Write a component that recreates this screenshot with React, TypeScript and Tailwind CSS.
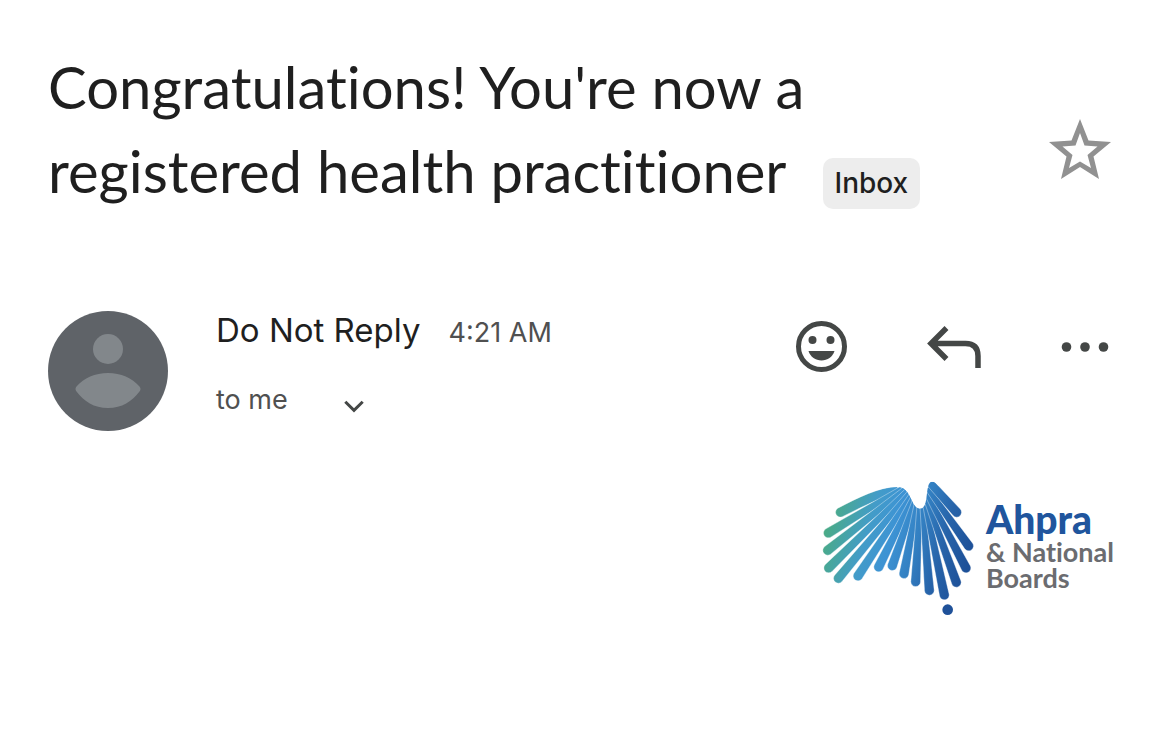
import React from "react";

type Ray = [number, number, number, number];

// Outer end x/y, inner end x/y of every straight ray of the logo.
const rays: Ray[] = [
  [82, 192, 296, 63],
  [80, 244, 304, 67],
  [83, 297, 311, 73],
  [112, 328, 318, 81],
  [171, 321, 324, 90],
  [233, 294, 330, 99],
  [274, 290, 337, 109],
  [309, 314, 345, 119],
  [344, 338, 355, 126],
  [385, 364, 366, 125],
  [430, 378, 375, 116],
  [466, 340, 380, 101],
  [495, 297, 383, 84],
  [503, 231, 387, 68],
  [467, 130, 394, 49],
];

// A tapered ray: round at the outer end, flat and slightly extended at the inner one.
function rayPath([ox, oy, ix, iy]: Ray, outer: number, inner: number): string {
  const len = Math.hypot(ix - ox, iy - oy);
  const dx = (ix - ox) / len;
  const dy = (iy - oy) / len;
  const ex = ix + dx * 14;
  const ey = iy + dy * 14;
  return [
    `M${ox - dy * outer} ${oy + dx * outer}`,
    `A${outer} ${outer} 0 0 1 ${ox + dy * outer} ${oy - dx * outer}`,
    `L${ex + dy * inner} ${ey - dx * inner}`,
    `L${ex - dy * inner} ${ey + dx * inner}Z`,
  ].join("");
}

function LogoMark() {
  return (
    <svg viewBox="60 30 465 408" className="h-[136px] w-[155px] shrink-0" aria-hidden="true">
      <defs>
        <linearGradient id="rays" gradientUnits="userSpaceOnUse" x1="75" y1="170" x2="500" y2="290">
          <stop offset="0" stopColor="#4aab86" />
          <stop offset="0.12" stopColor="#47a5a2" />
          <stop offset="0.28" stopColor="#439cc8" />
          <stop offset="0.45" stopColor="#3d93d4" />
          <stop offset="0.62" stopColor="#3380c2" />
          <stop offset="0.8" stopColor="#2763a9" />
          <stop offset="1" stopColor="#1d5098" />
        </linearGradient>
        <clipPath id="outline">
          <path d="M0 60L105 112C170 78 240 54 290 54C332 54 328 119 358 119C386 119 370 38 393 38C402 38 406 44 412 50L540 110V480H0Z" />
        </clipPath>
      </defs>
      <g fill="url(#rays)" stroke="#fff" strokeOpacity="0.55" strokeWidth="2" clipPath="url(#outline)">
        <path d="M112 117C170 86 235 54 288 53L302 72C240 82 180 116 124 143A14 14 0 0 1 112 117Z" />
        {rays.map((r) => (
          <path key={r[0]} d={rayPath(r, 14.5, r[0] === 467 ? 12 : 8)} />
        ))}
      </g>
      <circle cx="440" cy="422" r="16" fill="#1f5199" />
    </svg>
  );
}

function Avatar() {
  return (
    <svg viewBox="0 0 120 120" className="size-[120px] shrink-0" role="img" aria-label="Do Not Reply">
      <circle cx="60" cy="60" r="60" fill="#5f6368" />
      <circle cx="60" cy="38" r="15" fill="#82878b" />
      <path
        d="M28.500 75.500C36 67 47 62 60 62s24 5 31.500 13.500q2 2.500 0 5C84 90.500 74 97 60 97s-24-6.500-31.500-16.500q-2-2.500 0-5z"
        fill="#82878b"
      />
    </svg>
  );
}

export default function App() {
  return (
    <main className="bg-white px-12 pt-[45px] pb-32 font-['Inter',sans-serif] text-[#1f1f1f]">
      <header className="flex items-start justify-between pr-[11px]">
        <h1 className="max-w-[920px] font-['Lato',sans-serif] text-[58px] leading-[84px] [font-variant-ligatures:none]">
          Congratulations! You're now a<br />
          registered health practitioner
          <span className="ml-9 inline-block rounded-[10px] bg-[#ededed] px-3 font-['Inter',sans-serif] text-[28px] leading-[51px] font-medium">
            Inbox
          </span>
        </h1>
        <button type="button" aria-label="Star" className="mt-[74px] shrink-0">
          <svg viewBox="0 0 62 61" className="h-[61px] w-[62px]" fill="#919191" fillRule="evenodd">
            <path d="M31 0l8.500 21.500L62 23 44.500 37.500 50 60 31 48 12 60l5.500-22.500L0 23l22.500-1.500zM31 14l-4.500 12.500-13 1 10 8.500-3.500 13L31 42.500 42 49l-3.500-13 10-8.500-13-1z" />
          </svg>
        </button>
      </header>

      <section className="mt-[98px] flex items-start pr-[13px]">
        <Avatar />
        <div className="ml-12 flex-1">
          <div className="flex items-baseline gap-7 leading-[38px]">
            <span className="text-[33px]">Do Not Reply</span>
            <time className="text-[27px] text-[#505050]">4:21 AM</time>
          </div>
          <button type="button" className="mt-7 flex items-center gap-14 text-[27px] leading-10 text-[#505050]">
            to me
            <svg viewBox="0 0 20 13" className="mt-3 h-[13px] w-5" fill="none" stroke="#444746" strokeWidth="3" aria-hidden="true">
              <path d="M1.300 1.800L10 10.300l8.700-8.500" />
            </svg>
          </button>
        </div>
        <div className="flex shrink-0 items-center pt-[10px] text-[#444746]">
          <button type="button" aria-label="Add reaction">
            <svg viewBox="0 0 51 51" className="size-[51px]" fill="currentColor">
              <circle cx="25.500" cy="25.500" r="23" fill="none" stroke="currentColor" strokeWidth="5" />
              <circle cx="16.500" cy="19" r="4" />
              <circle cx="34.500" cy="19" r="4" />
              <path d="M12.500 30h26c-2 6-7 9.500-13 9.500s-11-3.500-13-9.500z" />
            </svg>
          </button>
          <button type="button" aria-label="Reply" className="ml-20">
            <svg viewBox="0 0 54 42" className="h-[42px] w-[54px]" fill="none" stroke="currentColor" strokeWidth="5.500">
              <path d="M19.500 2L4 17.500 19.500 33M4 17.500h34.500Q51 17.500 51 30v12" />
            </svg>
          </button>
          <button type="button" aria-label="More options" className="ml-20">
            <svg viewBox="0 0 48 10" className="h-[10px] w-12" fill="currentColor">
              <circle cx="5.500" cy="5" r="4.800" />
              <circle cx="24" cy="5" r="4.800" />
              <circle cx="42.500" cy="5" r="4.800" />
            </svg>
          </button>
        </div>
      </section>

      <div className="mt-12 flex items-start justify-end pr-2">
        <LogoMark />
        <div className="ml-2.5 flex flex-col pt-5 font-['Lato',sans-serif] font-bold text-[#6b6c70] [font-variant-ligatures:none]">
          <span className="text-[39px] leading-10 font-black text-[#20559d]">Ahpra</span>
          <span className="text-[27px] leading-[26px]">&amp; National</span>
          <span className="text-[27px] leading-[26px]">Boards</span>
        </div>
      </div>
    </main>
  );
}
